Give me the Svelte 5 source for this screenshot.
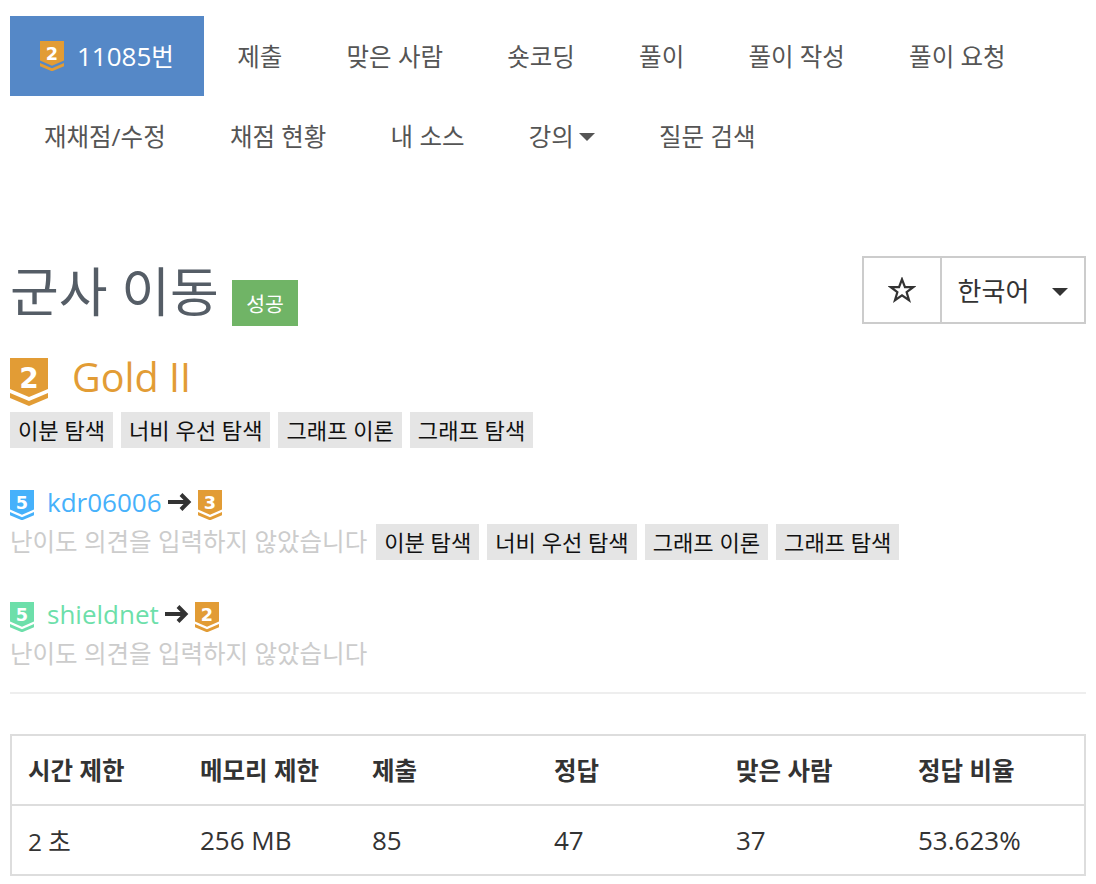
<script>
  const tabs = ['제출', '맞은 사람', '숏코딩', '풀이', '풀이 작성', '풀이 요청', '재채점/수정', '채점 현황', '내 소스'];
  const tags = ['이분 탐색', '너비 우선 탐색', '그래프 이론', '그래프 탐색'];
  const gold = '#e29c35';
  const blue = '#46b1fb';
  const green = '#6ddfaa';
  const headers = ['시간 제한', '메모리 제한', '제출', '정답', '맞은 사람', '정답 비율'];
  const values = ['2 초', '256 MB', '85', '47', '37', '53.623%'];
</script>

{#snippet badge(level, color, size)}
  <svg class="badge" width={size} height={size * 1.2632} viewBox="0 0 38 48">
    <path d="M0 0H38V31L19 39L0 31Z" fill={color} />
    <path d="M0 35L19 43L38 35V40L19 48L0 40Z" fill={color} />
    <text x="19" y="30" text-anchor="middle" fill="#fff">{level}</text>
  </svg>
{/snippet}

{#snippet arrow()}
  <svg class="arrow" width="24" height="20" viewBox="0 0 24 20">
    <path d="M0 10H20M13 2.5L20.5 10L13 17.5" fill="none" stroke="#333" stroke-width="4" />
  </svg>
{/snippet}

<div class="page">
  <nav class="tabs">
    <a class="tab active" href="#top">{@render badge(2, gold, 24)}<span><span class="num">11085</span>번</span></a>
    {#each tabs as t}
      <a class="tab" href="#top">{t}</a>
    {/each}
    <a class="tab" href="#top">강의<i class="caret"></i></a>
    <a class="tab" href="#top">질문 검색</a>
  </nav>

  <div class="head">
    <h1>군사 이동</h1>
    <span class="success">성공</span>
    <div class="btns">
      <button class="star" aria-label="즐겨찾기">
        <svg width="28" height="26" viewBox="0 0 30 28">
          <path d="M15 2.5L18.2 11H27L20 16.4L22.6 25L15 19.8L7.4 25L10 16.4L3 11H11.8Z" fill="none" stroke="#333" stroke-width="2.4" stroke-linejoin="miter" />
        </svg>
      </button>
      <button class="lang">한국어<i class="caret dark"></i></button>
    </div>
  </div>

  <div class="tier">
    {@render badge(2, gold, 38)}
    <span>Gold II</span>
  </div>
  <div class="tags">
    {#each tags as t}<span class="tag">{t}</span>{/each}
  </div>

  <div class="opinion first">
    {@render badge(5, blue, 24)}
    <span class="user" style="color:{blue}">kdr06006</span>
    {@render arrow()}
    {@render badge(3, gold, 24)}
  </div>
  <div class="note">
    <span class="none">난이도 의견을 입력하지 않았습니다</span>
    {#each tags as t}<span class="tag">{t}</span>{/each}
  </div>

  <div class="opinion">
    {@render badge(5, green, 24)}
    <span class="user" style="color:{green}">shieldnet</span>
    {@render arrow()}
    {@render badge(2, gold, 24)}
  </div>
  <div class="note">
    <span class="none">난이도 의견을 입력하지 않았습니다</span>
  </div>

  <hr />

  <div class="info">
    {#each headers as h}<div class="th">{h}</div>{/each}
    {#each values as v, i}<div class="td" class:num={i > 0}>{v}</div>{/each}
  </div>
</div>

<style>
  :global(body) {
    margin: 0;
    background: #fff;
    font-family: "Open Sans", "Noto Sans CJK KR", sans-serif;
    color: #333;
  }
  .page {
    padding: 16px 10px 0;
  }
  .num {
    font-size: 26px;
  }
  .tabs {
    display: flex;
    flex-wrap: wrap;
    width: 1076px;
  }
  .tab {
    height: 80px;
    display: flex;
    align-items: center;
    padding: 0 32.1px 2px;
    font-size: 24.5px;
    color: #555;
    text-decoration: none;
    box-sizing: border-box;
  }
  .tab.active {
    background: #5588c7;
    color: #fff;
    padding: 0 30px;
    gap: 13px;
  }
  .tab.active span {
    line-height: 1;
  }
  .tab:nth-child(2) {
    padding-left: 33.4px;
  }
  .tab:nth-child(8) {
    padding-left: 34px;
  }
  .caret {
    display: inline-block;
    width: 0;
    height: 0;
    margin: 4px 0 0 5px;
    border-top: 8px solid #555;
    border-left: 8px solid transparent;
    border-right: 8px solid transparent;
  }
  .caret.dark {
    border-top-color: #333;
    margin: 4px 0 0 23px;
  }
  .badge {
    display: block;
    flex: none;
  }
  .badge text {
    font-family: "DejaVu Sans", sans-serif;
    font-weight: 700;
    font-size: 28px;
  }
  .head {
    display: flex;
    align-items: flex-start;
    margin-top: 80px;
    height: 72px;
  }
  h1 {
    margin: 0;
    font-size: 53px;
    font-weight: 400;
    line-height: 72px;
    color: #555d66;
    flex: none;
    width: 208px;
    white-space: nowrap;
  }
  .success {
    margin: 24px 0 0 14px;
    width: 66px;
    height: 46px;
    display: flex;
    align-items: center;
    justify-content: center;
    background: #70b466;
    color: #fff;
    font-size: 20.5px;
  }
  .btns {
    display: flex;
    margin-left: auto;
    height: 68px;
    border: 2px solid #ccc;
    box-sizing: border-box;
  }
  .btns button {
    border: 0;
    background: #fff;
    color: #333;
    font: inherit;
    font-size: 26px;
    padding: 0;
    display: flex;
    align-items: center;
    justify-content: center;
  }
  .btns .star {
    width: 78px;
    border-right: 2px solid #ccc;
  }
  .lang {
    width: 142px;
  }
  .tier {
    display: flex;
    align-items: center;
    gap: 24px;
    margin-top: 30px;
    height: 48px;
    color: #e29c35;
    font-size: 39.5px;
    line-height: 48px;
  }
  .tier span {
    margin-top: -10px;
  }
  .tags {
    display: flex;
    gap: 8px;
    margin-top: 6px;
  }
  .tag {
    background: #e5e5e5;
    color: #111;
    font-size: 22.1px;
    height: 36px;
    line-height: 36px;
    padding: 0 8px;
    white-space: nowrap;
  }
  .opinion {
    display: flex;
    align-items: center;
    height: 30px;
    margin-top: 42px;
  }
  .user {
    margin-left: 13px;
    margin-right: 6px;
    font-size: 26px;
    line-height: 30px;
    margin-top: -6px;
  }
  .arrow {
    margin-right: 6px;
    margin-top: -6px;
  }
  .note {
    display: flex;
    align-items: center;
    gap: 8px;
    height: 36px;
    margin-top: 4px;
  }
  .none {
    color: #ccc;
    font-size: 24.5px;
    line-height: 36px;
    margin-right: 1px;
  }
  hr {
    border: 0;
    border-top: 2px solid #eee;
    margin: 20px 0 0;
  }
  .info {
    margin-top: 40px;
    display: grid;
    grid-template-columns: 172px 172px 182px 182px 182px 1fr;
    border: 2px solid #ddd;
  }
  .th, .td {
    padding: 0 16px;
    height: 68px;
    box-sizing: border-box;
    display: flex;
    align-items: center;
    font-size: 24.5px;
  }
  .th {
    font-weight: 700;
    height: 70px;
    padding-bottom: 2px;
    border-bottom: 2px solid #ddd;
  }
  .td.num {
    font-size: 26px;
  }
</style>
